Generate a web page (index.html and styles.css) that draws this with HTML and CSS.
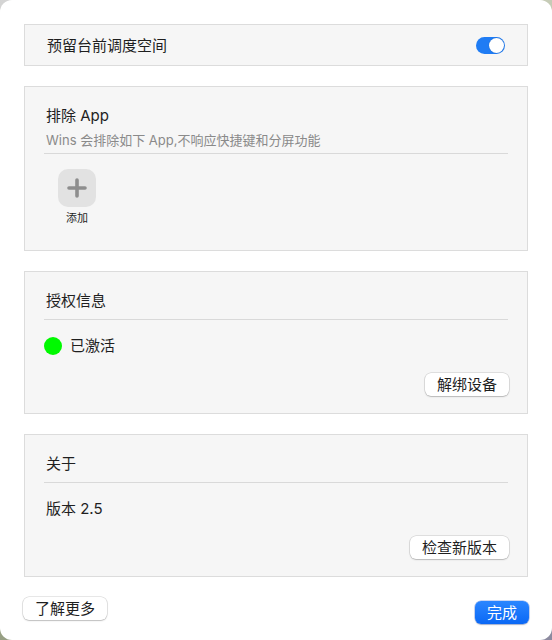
FILE: index.html
```html
<!DOCTYPE html>
<html lang="zh-CN">
<head>
    <meta charset="UTF-8">
    <title>Wins 设置</title>
    <link rel="stylesheet" href="styles.css">
</head>
<body>
    <div class="sheet">
        <div class="card card-row">
            <span class="label">预留台前调度空间</span>
            <span class="switch on"><span class="knob"></span></span>
        </div>

        <div class="card">
            <div class="title">排除 App</div>
            <div class="subtitle">Wins 会排除如下 App,不响应快捷键和分屏功能</div>
            <div class="divider"></div>
            <div class="apps">
                <div class="add">
                    <div class="add-btn">
                        <svg width="20" height="20" viewBox="0 0 20 20">
                            <path d="M10 2v16M2 10h16" stroke="#8e8e8e" stroke-width="3.6" stroke-linecap="round"/>
                        </svg>
                    </div>
                    <div class="add-label">添加</div>
                </div>
            </div>
        </div>

        <div class="card">
            <div class="title">授权信息</div>
            <div class="divider"></div>
            <div class="status">
                <span class="dot"></span>
                <span>已激活</span>
            </div>
            <div class="actions">
                <button class="btn">解绑设备</button>
            </div>
        </div>

        <div class="card">
            <div class="title">关于</div>
            <div class="divider"></div>
            <div class="status">版本 2.5</div>
            <div class="actions">
                <button class="btn">检查新版本</button>
            </div>
        </div>

        <div class="footer">
            <button class="btn">了解更多</button>
            <button class="btn primary">完成</button>
        </div>
    </div>
</body>
</html>
```

FILE: styles.css
```css
html, body {
    margin: 0;
    height: 100%;
}
body {
    background: linear-gradient(160deg, #d4d4d4 0%, #b9c49c 45%, #9fae72 60%, #8c8aa0 100%);
    font-family: "Inter", "Noto Sans CJK SC", sans-serif;
    color: #1f1f1f;
}
.sheet {
    width: 552px;
    height: 640px;
    box-sizing: border-box;
    background: #fff;
    border-radius: 12px;
    padding: 24px 24px 0;
}
.card {
    background: #f6f6f6;
    border: 1px solid #dcdcdc;
    padding: 19px 19px 17px;
    margin-bottom: 20px;
}
.card-row {
    display: flex;
    align-items: center;
    justify-content: space-between;
    height: 40px;
    padding: 0 22px 0 22px;
    box-sizing: content-box;
}
.label {
    font-size: 15px;
    line-height: 20px;
    padding-top: 2px;
}
.switch {
    width: 29px;
    height: 17px;
    border-radius: 9px;
    background: #cfcfcf;
    display: flex;
    align-items: center;
    padding: 0 1px;
    box-sizing: border-box;
}
.switch.on {
    background: #1f7cf4;
    justify-content: flex-end;
}
.knob {
    width: 15px;
    height: 15px;
    border-radius: 50%;
    background: #fff;
    box-shadow: 0 0 1px rgba(0, 0, 0, 0.3);
}
.title {
    font-size: 15px;
    line-height: 20px;
    padding-left: 2px;
}
.subtitle {
    font-size: 13px;
    line-height: 18px;
    color: #8a8a8a;
    margin-top: 5px;
    padding-left: 2px;
}
.divider {
    height: 1px;
    background: #d9d9d9;
    margin-top: 8px;
}
.subtitle + .divider {
    margin-top: 4px;
}
.apps {
    display: flex;
    padding: 15px 0 8px 14px;
}
.add {
    display: flex;
    flex-direction: column;
    align-items: center;
}
.add-btn {
    width: 38px;
    height: 38px;
    border-radius: 10px;
    background: #e2e2e2;
    display: flex;
    align-items: center;
    justify-content: center;
}
.add-label {
    font-size: 11px;
    line-height: 14px;
    margin-top: 4px;
}
.status {
    display: flex;
    align-items: center;
    gap: 8px;
    font-size: 15px;
    line-height: 20px;
    margin-top: 16px;
    padding-left: 2px;
}
.dot {
    width: 18px;
    height: 18px;
    border-radius: 50%;
    background: #00f900;
    margin-left: -2px;
}
.actions {
    display: flex;
    justify-content: flex-end;
    margin-top: 17px;
    margin-right: -1px;
}
.btn {
    font-family: inherit;
    font-size: 15px;
    line-height: 21px;
    height: 23px;
    padding: 0 12px;
    border: none;
    border-radius: 6px;
    background: #fff;
    color: #1f1f1f;
    box-shadow: 0 0 0 0.5px rgba(0, 0, 0, 0.18), 0 1px 1.5px rgba(0, 0, 0, 0.18);
}
.footer {
    display: flex;
    justify-content: space-between;
    align-items: flex-start;
    margin: 1px -1px 0 -1px;
}
.primary {
    margin-top: 4px;
    color: #fff;
    background: linear-gradient(#2b86ff, #0a68f5);
    box-shadow: 0 0 0 0.5px rgba(0, 60, 200, 0.4), 0 1px 1.5px rgba(0, 0, 0, 0.2);
}
```
